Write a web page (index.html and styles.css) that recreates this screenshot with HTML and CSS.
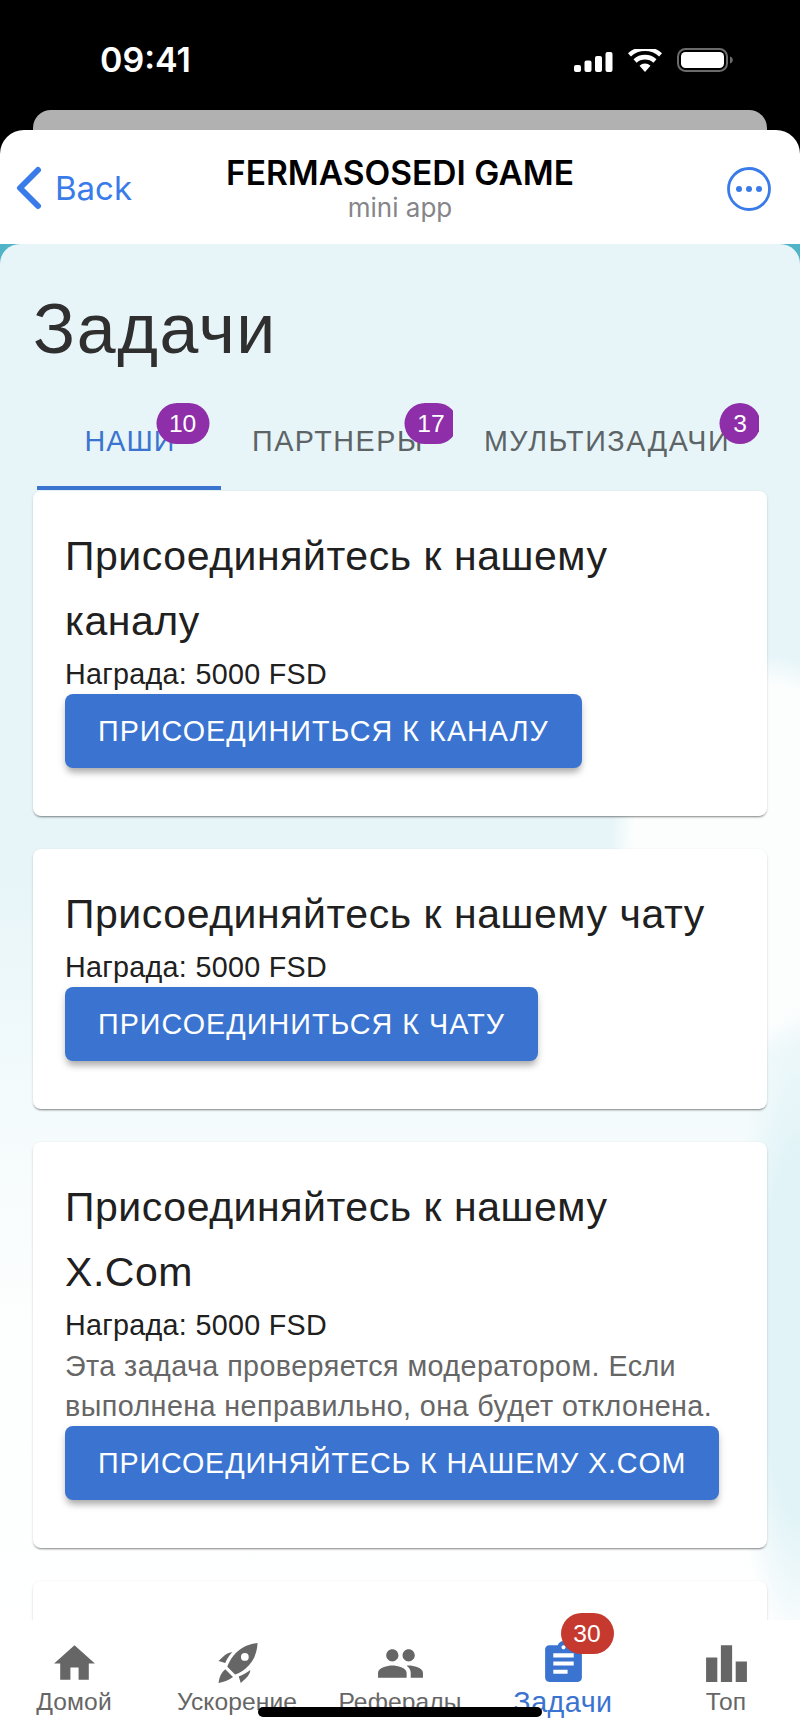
FILE: index.html
```html
<!DOCTYPE html>
<html lang="ru">
<head>
<meta charset="utf-8">
<title>Задачи</title>
<link rel="stylesheet" href="styles.css">
</head>
<body>
<div class="screen">
  <div class="status">
    <span class="time">09:41</span>
    <div class="status-icons">
      <svg class="sig" width="39" height="20" viewBox="0 0 39 20"><rect x="0" y="13" width="7" height="7" rx="2"/><rect x="10.500" y="8.500" width="7" height="11.500" rx="2"/><rect x="21" y="4" width="7" height="16" rx="2"/><rect x="31.500" y="0" width="7" height="20" rx="2"/></svg>
      <svg class="wifi" width="34" height="23" viewBox="0 0 34 23"><path d="M17 23l-5.500-6.200a8 8 0 0 1 11 0z"/><path d="M8.600 13.800L5.500 10.300a17 17 0 0 1 23 0l-3.100 3.500a12.400 12.400 0 0 0-16.800 0z"/><path d="M2.900 7.400L0 4.200a25.500 25.500 0 0 1 34 0l-2.900 3.200a21.200 21.200 0 0 0-28.200 0z"/></svg>
      <svg class="batt" width="56" height="24" viewBox="0 0 56 24"><rect x="1" y="1" width="49" height="22" rx="7.500" fill="none" stroke="#6b6b6b" stroke-width="2"/><rect x="4" y="4" width="43" height="16" rx="4.500" fill="#fff"/><path d="M53 8.500c1.800.6 2.800 1.900 2.800 3.500s-1 2.900-2.800 3.500z" fill="#6b6b6b"/></svg>
    </div>
  </div>
  <div class="peek"></div>
  <header class="bar">
    <div class="back">
      <svg width="26" height="44" viewBox="0 0 26 44"><path d="M22 4L4 22l18 18" fill="none" stroke="#3a7bea" stroke-width="6" stroke-linecap="round" stroke-linejoin="round"/></svg>
      <span class="back-text">Back</span>
    </div>
    <div class="bar-title">
      <div class="app-name">FERMASOSEDI GAME</div>
      <div class="app-sub">mini app</div>
    </div>
    <div class="more">
      <svg width="44" height="44" viewBox="0 0 44 44"><circle cx="22" cy="22" r="20.500" fill="none" stroke="#3a7bea" stroke-width="2.800"/><circle cx="12" cy="22" r="3" fill="#3a7bea"/><circle cx="22" cy="22" r="3" fill="#3a7bea"/><circle cx="32" cy="22" r="3" fill="#3a7bea"/></svg>
    </div>
  </header>
  <div class="stage">
    <main class="content">
      <h1 class="page-title">Задачи</h1>
      <div class="tabs">
        <div class="tab tab-active"><span class="tab-label">НАШИ<span class="badge badge-wide">10</span></span></div>
        <div class="tab"><span class="tab-label">ПАРТНЕРЫ<span class="badge badge-wide">17</span></span></div>
        <div class="tab"><span class="tab-label">МУЛЬТИЗАДАЧИ<span class="badge">3</span></span></div>
      </div>
      <div class="cards">
        <section class="card">
          <h2 class="card-title">Присоединяйтесь к нашему каналу</h2>
          <p class="reward">Награда: 5000 FSD</p>
          <button class="btn">ПРИСОЕДИНИТЬСЯ К КАНАЛУ</button>
        </section>
        <section class="card">
          <h2 class="card-title">Присоединяйтесь к нашему чату</h2>
          <p class="reward">Награда: 5000 FSD</p>
          <button class="btn">ПРИСОЕДИНИТЬСЯ К ЧАТУ</button>
        </section>
        <section class="card">
          <h2 class="card-title">Присоединяйтесь к нашему X.Com</h2>
          <p class="reward">Награда: 5000 FSD</p>
          <p class="note">Эта задача проверяется модератором. Если выполнена неправильно, она будет отклонена.</p>
          <button class="btn btn-latin">ПРИСОЕДИНЯЙТЕСЬ К НАШЕМУ X.COM</button>
        </section>
        <section class="card card-cut"></section>
      </div>
    </main>
    <nav class="nav">
      <div class="nav-item">
        <svg class="nav-icon" viewBox="0 0 24 24"><path d="M10 20v-6h4v6h5v-8h3L12 3 2 12h3v8z"/></svg>
        <span class="nav-label">Домой</span>
      </div>
      <div class="nav-item">
        <svg class="nav-icon" viewBox="0 0 24 24"><path fill-rule="evenodd" d="M21.800 2C17 2.400 13 4.600 10 8.200 8.400 10.200 7.400 12.400 7 13.600l3.800 3.800c1.200-.4 3.400-1.400 5.200-3C19.800 11.200 21.600 7 21.800 2zM15.600 6.900a1.900 1.900 0 1 1 0 3.800 1.900 1.900 0 0 1 0-3.800z"/><path d="M9.500 6.400C7.500 6.800 6 7.600 4.800 8.800l-2.100 2 3.300 1C6.800 9.800 8 8 9.500 6.400z"/><path d="M18.300 15.200c-1.900 1.400-3.700 2.400-5.700 3.200l1 3.200 2.400-2.200c1.400-1.400 2.200-2.800 2.300-4.200z"/><path d="M6 14.800l3.800 3.800C8 20 5.500 21 2.700 21.600 3 18.800 4 16.400 6 14.800z"/></svg>
        <span class="nav-label">Ускорение</span>
      </div>
      <div class="nav-item">
        <svg class="nav-icon" viewBox="0 0 24 24"><path d="M16 11c1.660 0 2.990-1.340 2.990-3S17.660 5 16 5c-1.660 0-3 1.340-3 3s1.340 3 3 3zm-8 0c1.660 0 2.990-1.340 2.990-3S9.660 5 8 5C6.340 5 5 6.340 5 8s1.340 3 3 3zm0 2c-2.330 0-7 1.170-7 3.500V19h14v-2.500c0-2.330-4.670-3.500-7-3.500zm8 0c-.29 0-.62.02-.97.05 1.160.84 1.970 1.970 1.970 3.450V19h6v-2.500c0-2.330-4.670-3.500-7-3.500z"/></svg>
        <span class="nav-label">Рефералы</span>
      </div>
      <div class="nav-item nav-active">
        <span class="nav-icon-wrap">
          <svg class="nav-icon" viewBox="0 0 24 24"><path d="M19 3h-4.180C14.400 1.840 13.300 1 12 1c-1.300 0-2.400.84-2.820 2H5c-1.100 0-2 .9-2 2v14c0 1.100.9 2 2 2h14c1.100 0 2-.9 2-2V5c0-1.100-.9-2-2-2zm-7 0c.55 0 1 .45 1 1s-.45 1-1 1-1-.45-1-1 .45-1 1-1zm2 14H7v-2h7v2zm3-4H7v-2h10v2zm0-4H7V7h10v2z"/></svg>
          <span class="nav-badge">30</span>
        </span>
        <span class="nav-label">Задачи</span>
      </div>
      <div class="nav-item">
        <svg class="nav-icon" viewBox="0 0 24 24"><path d="M7.500 21H2V9h5.500v12zm7.250-18h-5.500v18h5.500V3zM22 11h-5.500v10H22V11z"/></svg>
        <span class="nav-label">Топ</span>
      </div>
    </nav>
    <div class="home-bar"></div>
  </div>
</div>
</body>
</html>
```
FILE: styles.css
```css
* { box-sizing: border-box; }
html, body { margin: 0; padding: 0; background: #000; }
body { font-family: "Liberation Sans", Arial, sans-serif; }

.screen {
  position: relative;
  width: 800px;
  height: 1734px;
  display: flex;
  flex-direction: column;
  overflow: hidden;
  background: #000;
}

/* status bar */
.status {
  height: 110px;
  flex: none;
  display: flex;
  justify-content: space-between;
  align-items: flex-start;
  padding: 41px 67px 0 100px;
}
.time {
  font-family: Inter, "Liberation Sans", sans-serif;
  font-weight: 600;
  font-size: 34px;
  line-height: 38px;
  color: #fff;
}
.status-icons { display: flex; align-items: flex-end; gap: 15px; padding-top: 7px; }
.sig, .wifi { fill: #fff; }

.peek {
  height: 20px;
  flex: none;
  margin: 0 33px;
  background: #b1b1b1;
  border-radius: 18px 18px 0 0;
}

/* telegram bar */
.bar {
  height: 114px;
  flex: none;
  display: grid;
  grid-template-columns: 1fr auto 1fr;
  align-items: start;
  background: #fff;
  border-radius: 24px 24px 0 0;
  padding: 0 29px;
  font-family: Inter, "Liberation Sans", sans-serif;
}
.back { display: flex; align-items: center; gap: 13px; padding-top: 36px; margin-left: -13px; }
.back-text { font-size: 33px; line-height: 44px; color: #3a7bea; }
.bar-title { text-align: center; padding-top: 23px; }
.app-name { font-size: 33.500px; line-height: 40px; font-weight: 600; color: #000; white-space: nowrap; }
.app-sub { font-size: 26px; line-height: 30px; color: #85858a; }
.more { justify-self: end; padding-top: 37px; }
.more svg, .back svg { display: block; }

/* content */
.stage {
  position: relative;
  flex: 1;
  min-height: 0;
  background: #4fb4c8;
}
.content {
  height: 100%;
  overflow: hidden;
  border-radius: 20px 20px 0 0;
  padding: 0 33px;
  background:
    radial-gradient(ellipse 70px 330px at 800px 1090px, #e1f3f7 0%, #e1f3f7 55%, rgba(225,243,247,0) 100%),
    radial-gradient(ellipse 150px 200px at 760px 610px, #fcfefe 0%, #fcfefe 85%, rgba(252,254,254,0) 100%),
    linear-gradient(180deg, #e7f5f9 0%, #e7f5f8 42%, #f4fbfc 58%, #fdfefe 72%, #ffffff 100%);
}
.page-title {
  margin: 0;
  padding-top: 42px;
  font-size: 69.800px;
  line-height: 86px;
  font-weight: 400;
  letter-spacing: 1.600px;
  color: #2f2f2f;
}
.tabs { display: flex; height: 99px; margin: 19px 0 0 4px; }
.tab {
  flex: none;
  min-width: 184px;
  height: 99px;
  padding: 0 29px 0 31px;
  display: flex;
  align-items: center;
  justify-content: center;
  overflow: hidden;
  font-size: 28.700px;
  letter-spacing: 1.550px;
  color: #5d6466;
  border-bottom: 4px solid transparent;
}
.tab-active { color: #3a74d0; border-bottom-color: #3a74d0; letter-spacing: 1.100px; }
.tab-label { position: relative; line-height: 33px; padding-top: 6px; white-space: nowrap; }
.badge {
  position: absolute;
  top: -16px;
  left: calc(100% + 10px);
  transform: translateX(-50%);
  width: 41px;
  height: 41px;
  border-radius: 20.500px;
  background: #8e2ea8;
  color: #fff;
  font-size: 24.600px;
  line-height: 41px;
  letter-spacing: 0;
  text-align: center;
}
.badge-wide { width: 53px; left: calc(100% + 7px); }

.cards { display: flex; flex-direction: column; gap: 33px; margin-top: 1px; }
.card {
  flex: none;
  background: #fff;
  border-radius: 8px;
  padding: 33px 33px 48px 32px;
  box-shadow: 0 2px 2px -1px rgba(0,0,0,.4), 0 1px 3px rgba(0,0,0,.12);
}
.card-cut { height: 200px; }
.card-title {
  margin: 0;
  font-size: 41px;
  line-height: 65px;
  font-weight: 400;
  letter-spacing: .55px;
  color: #202020;
}
.reward {
  margin: 0;
  font-size: 28.700px;
  line-height: 40px;
  letter-spacing: .3px;
  color: #202020;
}
.note {
  margin: 0;
  padding-top: 1px;
  font-size: 28.700px;
  line-height: 40px;
  letter-spacing: .43px;
  color: #666;
}
.btn {
  display: block;
  height: 74px;
  padding: 0 33px;
  border: 0;
  border-radius: 8px;
  background: #3a74d0;
  color: #fff;
  font-family: inherit;
  font-size: 28.700px;
  letter-spacing: 1.060px;
  white-space: nowrap;
  box-shadow: 0 6px 6px -2px rgba(0,0,0,.25), 0 4px 10px rgba(0,0,0,.12);
}
.btn-latin { letter-spacing: .87px; }

/* bottom nav */
.nav {
  position: absolute;
  left: 0;
  right: 0;
  bottom: 0;
  height: 114px;
  display: flex;
  justify-content: center;
  background: #fff;
  border-radius: 0 0 24px 24px;
}
.nav-item {
  flex: 0 0 163px;
  display: flex;
  flex-direction: column;
  align-items: center;
  padding-top: 19px;
  color: #666;
}
.nav-icon { display: block; width: 49px; height: 49px; fill: currentColor; }
.nav-icon-wrap { position: relative; display: block; }
.nav-label { font-size: 24.600px; line-height: 30px; margin-top: -1px; letter-spacing: .1px; white-space: nowrap; }
.nav-active { color: #3a74d0; }
.nav-active .nav-label { font-size: 28.700px; letter-spacing: .5px; }
.nav-badge {
  position: absolute;
  top: -26px;
  left: 22px;
  width: 53px;
  height: 41px;
  border-radius: 20.500px;
  background: #c5392f;
  color: #fff;
  font-size: 24.600px;
  line-height: 41px;
  text-align: center;
}
.home-bar {
  position: absolute;
  left: 258px;
  bottom: 17px;
  width: 284px;
  height: 10px;
  border-radius: 5px;
  background: #000;
}
```
